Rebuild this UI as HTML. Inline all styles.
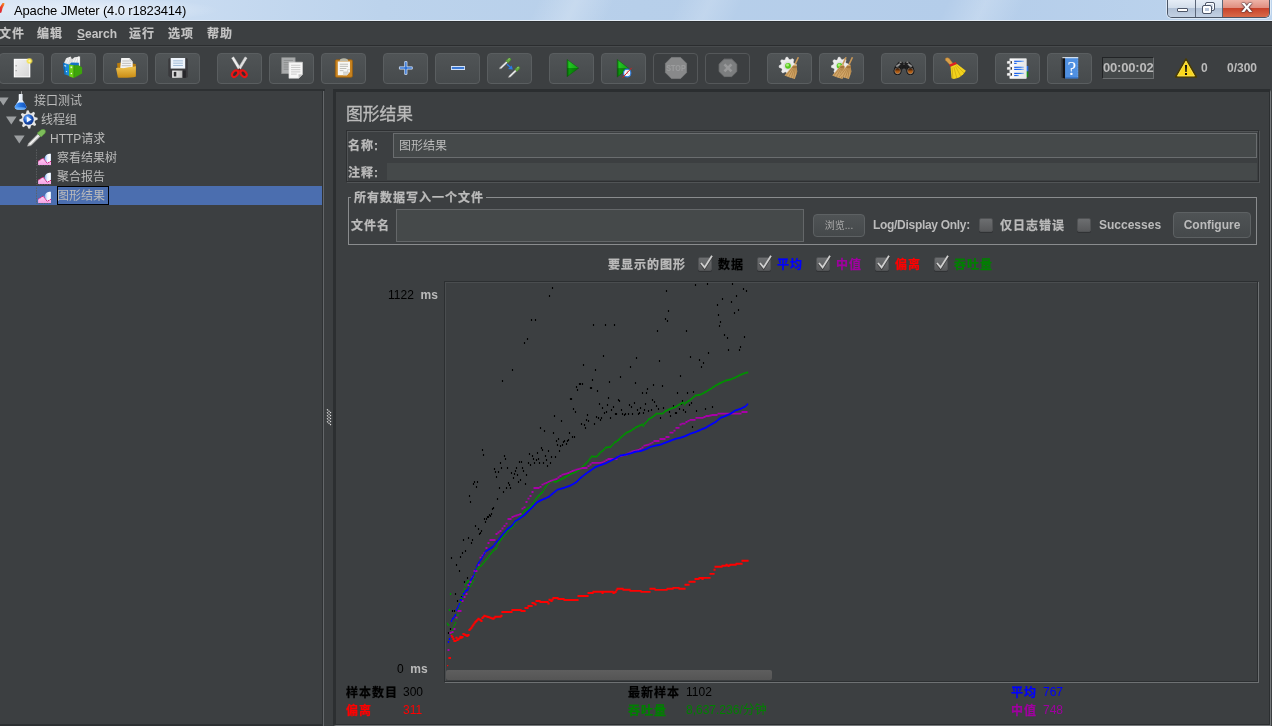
<!DOCTYPE html>
<html><head><meta charset="utf-8"><title>Apache JMeter (4.0 r1823414)</title>
<style>
*{box-sizing:border-box;margin:0;padding:0}
html,body{width:1272px;height:726px;overflow:hidden;background:#3c3f41}
body{position:relative;will-change:transform;font-family:"Liberation Sans","Noto Sans CJK SC",sans-serif;font-size:12px;color:#bbbbbb}
.abs{position:absolute}
#title{left:0;top:0;width:1272px;height:21px;background:radial-gradient(ellipse 120px 12px at 100px 10px,rgba(255,255,255,.5),rgba(255,255,255,0) 100%),linear-gradient(115deg,rgba(255,255,255,0) 0,rgba(255,255,255,0) 42%,rgba(255,255,255,.22) 45%,rgba(255,255,255,0) 48%,rgba(255,255,255,0) 53%,rgba(255,255,255,.16) 55.5%,rgba(255,255,255,0) 58%,rgba(255,255,255,0) 74%,rgba(255,255,255,.2) 77%,rgba(255,255,255,0) 80%),linear-gradient(90deg,#dbe7f5 0,#cbddf2 12%,#bcd3ec 30%,#b7cfea 50%,#b4cdea 75%,#bdd4ed 100%);border-bottom:1px solid #e4edf7}
#title .t{left:14px;top:3px;font-size:13px;color:#000;line-height:16px;white-space:nowrap;letter-spacing:-.15px}
#wbtns{left:1167px;top:0;width:103px;height:18px;border:1px solid #4a5566;border-top:0;border-radius:0 0 5px 5px;overflow:hidden;display:flex;box-shadow:0 0 0 1px rgba(255,255,255,.5)}
.wb{height:17px;position:relative;border-right:1px solid #5b6678;background:linear-gradient(#e6edf6 0,#d3deeb 45%,#b1c1d6 50%,#c3d1e3 100%)}
.wmin{width:28px}.wmax{width:28px}
.wclose{width:46px;border-right:0;background:linear-gradient(#eeb4a8 0,#e08f80 45%,#c8432b 50%,#d86a4a 100%)}
.wmin i{position:absolute;left:9px;top:8px;width:11px;height:4px;background:#fff;border:1px solid #4d5668;border-radius:1px}
.wmax i{position:absolute;left:10px;top:3px;width:8px;height:7px;border:1.5px solid #fff;outline:1px solid #4d5668;border-radius:1px}
.wmax b{position:absolute;left:7px;top:6px;width:8px;height:7px;border:2px solid #fff;outline:1px solid #4d5668;background:#b9c7da;border-radius:1px}
.wclose span{position:absolute;left:2px;right:0;top:-2px;text-align:center;font-weight:bold;font-size:16px;line-height:18px;color:#fff;text-shadow:0 0 1px #40303a,0 0 1px #40303a,0 0 2px #40303a;transform:scaleX(1.25)}
#menubar{left:0;top:21px;width:1272px;height:24px;background:#3c3f41;border-top:1px solid #2f3234}
#menubar span{-webkit-text-stroke:.2px;position:absolute;top:5px;font-size:12px;line-height:14px;color:#c4c4c4;white-space:nowrap;font-weight:bold;letter-spacing:1px}
#menubar span.en{-webkit-text-stroke:0;letter-spacing:0;font-size:12px;top:5px}
#menuline{left:0;top:45px;width:1272px;height:2px;background:#2b2d2f;border-bottom:1px solid #484b4d}
#toolbar{left:0;top:47px;width:1272px;height:41px;background:#3c3f41}
.tb{position:absolute;top:6px;width:45px;height:31px;border:1px solid #5a5e60;border-radius:4px;background:linear-gradient(#505456,#464a4c)}
.tb.dis{background:#3c3f41;border-color:#55585a}
.tb svg{position:absolute;left:0;top:0;overflow:visible}
#timer{left:1102px;top:10px;width:52px;height:22px;border:1px solid #222426;border-right-color:#6a6d6f;border-bottom-color:#6a6d6f;background:#45494a;color:#bbb;font-weight:bold;font-size:13px;line-height:20px;text-align:center;letter-spacing:-.2px;white-space:nowrap}
.tbt{top:14px;font-size:12px;font-weight:bold;color:#bbb;line-height:15px;white-space:nowrap}
#hsep{display:none}
#tree{left:0;top:90px;width:322px;height:636px;background:#3c3f41;border-bottom:2px solid #2d3032}
#treetop{left:0;top:89px;width:324px;height:2px;background:#2d3032}
#tree .sel{left:0;top:96px;width:322px;height:19px;background:#4b6eaf}
#tree .focus{left:57px;top:96px;width:52px;height:19px;border:1px solid #000}
.row{position:absolute;height:19px;line-height:20px;font-size:12px;white-space:nowrap;color:#bbbbbb}
#divider{left:322px;top:89px;width:12px;height:637px;background:linear-gradient(#2d3032 0 2px,#3c3f41 2px) ;border-left:1px solid #2f3234}
#divider:after{content:'';position:absolute;left:0;top:2px;width:1px;height:635px;background:#64676a}
#divgap{left:325px;top:88px;width:8px;height:10px;background:#3c3f41}

#main{left:333px;top:89px;width:938px;height:637px;background:#3c3f41;border-left:3px solid #2c2f31;border-top:3px solid #2b2e30;border-right:1px solid #75787a;border-bottom:1px solid #75787a;box-shadow:inset -1px -1px 0 #2b2e30}
.h1{-webkit-text-stroke:.3px;font-size:16.8px;line-height:22px;color:#bbb;white-space:nowrap}
.lb{-webkit-text-stroke:.25px;font-weight:bold;font-size:12px;line-height:15px;letter-spacing:1px;white-space:nowrap;color:#bbb}
.lb.en{letter-spacing:0;-webkit-text-stroke:0}
.val{font-size:12px;line-height:15px;white-space:nowrap}
#namebox{left:346px;top:130px;width:913px;height:52px;border:1px solid #2e3032;box-shadow:inset 1px 1px 0 #515456,1px 1px 0 #515456}
#namefield{left:393px;top:133px;width:864px;height:25px;border:1px solid #6a6d6f;background:#45494a;color:#bbb;font-size:12px;line-height:25px;padding-left:5px}
#commentfield{left:387px;top:163px;width:870px;height:17px;background:#45494a}
#fs{left:348px;top:197px;width:909px;height:48px;border:1px solid #8a8c8e}
.legend{background:#3c3f41;padding:0 2px 0 3px}
#filefield{left:396px;top:209px;width:408px;height:33px;border:1px solid #646769;background:#45494a}
.btn{border:1px solid #5d6163;border-radius:4px;background:linear-gradient(#4f5355,#45494b);color:#bbb;font-weight:bold;font-size:12px;text-align:center;line-height:24px;white-space:nowrap}
.btn.small{font-weight:normal;font-size:10px;line-height:21px;color:#a8a8a8}
.cb{width:14px;height:14px;border:1px solid #505254;border-radius:2px;background:linear-gradient(#6c6e70,#58595b);box-shadow:0 1px 0 #303234}
#chart{left:444px;top:281px;width:814px;height:401px;border:1px solid #2c2f31;box-shadow:inset 1px 1px 0 #4a4d4f,1px 1px 0 #6e7173}
.ax{font-size:12px;line-height:15px;color:#bbb;white-space:nowrap}
#sbar{left:446px;top:670px;width:326px;height:10px;background:linear-gradient(#5e5e5e,#555555);border-radius:2px}
#botline{display:none}

</style></head><body>
<div id="title" class="abs">
<svg class="abs" style="left:0;top:0" width="8" height="21" viewBox="0 0 8 21"><defs><linearGradient id="gfe" x1="0" y1="1" x2="1" y2="0"><stop offset="0" stop-color="#d81e3a"/><stop offset=".55" stop-color="#ee4a24"/><stop offset="1" stop-color="#f99d1c"/></linearGradient></defs><path d="M0 13 L0 7 L2.6 3 L4.4 3.1 L4.2 5 L2.6 8 L1.4 12.6Z" fill="url(#gfe)"/></svg>
<div class="t abs">Apache JMeter (4.0 r1823414)</div>
<div id="wbtns" class="abs"><div class="wb wmin"><i></i></div><div class="wb wmax"><i></i><b></b></div><div class="wb wclose"><span>x</span></div></div>
</div>
<div id="menubar" class="abs"><span style="left:-1px">文件</span><span style="left:37px">编辑</span><span class="en" style="left:77px"><u>S</u>earch</span><span style="left:129px">运行</span><span style="left:168px">选项</span><span style="left:207px">帮助</span></div>
<div id="menuline" class="abs"></div>
<div id="toolbar" class="abs">
<div class="tb" style="left:-1px"><svg width="43" height="29" viewBox="0 0 43 29"><g transform="translate(9.83 1.99) scale(1.019 0.969)"><defs><linearGradient id="gnew" x1="0" y1="0" x2="1" y2="1"><stop offset="0" stop-color="#f2f2f2"/><stop offset="1" stop-color="#d6d6d6"/></linearGradient><radialGradient id="gstar"><stop offset="0" stop-color="#fffbd0"/><stop offset=".5" stop-color="#f5e24a"/><stop offset="1" stop-color="#f5e24a" stop-opacity="0"/></radialGradient></defs>
<rect x="4.5" y="3.5" width="15" height="18" fill="url(#gnew)" stroke="#fdfdfd" stroke-width="1.2"/><rect x="5.6" y="9.5" width="1.2" height="1.2" fill="#999"/><rect x="5.6" y="14.5" width="1.2" height="1.2" fill="#999"/><circle cx="19.3" cy="5.2" r="3.6" fill="url(#gstar)"/></g></svg></div>
<div class="tb" style="left:51px"><svg width="43" height="29" viewBox="0 0 43 29"><g transform="translate(9.50 2.00) scale(1.000 1.000)"><path d="M2.3 7.4 L4.6 2.2 L9.2 0.5 L10.4 3.2 L13 1.2 L18.6 0.4 L18.6 10 L8 10 Z" fill="#dedede"/><path d="M4.2 6.6L6.4 1.8M6 7.2L8.2 1.2M11 7.4L13.6 1.6M13.4 7.6L16 1" stroke="#f8f8f8" stroke-width=".9"/><path d="M17.2 0.6 V9.4" stroke="#fafafa" stroke-width="1.2"/>
<path d="M7.6 8.6 L10 6.4 L17.4 6.8 L17.4 10.4 L8 12Z" fill="#1672c4"/><path d="M1.4 6.8 L7.6 8.6 L8 20 L3 18.2Z" fill="#1a8ad8"/><path d="M1.4 6.8 L3 7.3 L4.2 18.6 L3 18.2Z" fill="#0e66b4"/>
<path d="M7.6 8.4 L12.4 9.2 L12.4 22 L7.8 20.4Z" fill="#69cf14"/><path d="M12.4 9.2 L17.3 9.2 L20.6 11.4 L20.6 17.6 L12.4 22Z" fill="#3da50c"/><path d="M12.4 9.2V22" stroke="#2f8a08" stroke-width=".6"/>
<path d="M2.8 8.8 L4.6 9.4 L4.7 10.8 L2.9 10.2Z" fill="#cfe6fb"/><rect x="9" y="10.4" width="1.7" height="1.8" fill="#e6fad0"/><circle cx="5" cy="15.6" r=".65" fill="#dcecff"/><circle cx="9.9" cy="17.6" r=".75" fill="#f4ffe8"/></g></svg></div>
<div class="tb" style="left:103px"><svg width="43" height="29" viewBox="0 0 43 29"><g transform="translate(9.40 0.79) scale(1.042 1.070)"><defs><linearGradient id="gfo" x1="0" y1="0" x2="0" y2="1"><stop offset="0" stop-color="#f0c452"/><stop offset="1" stop-color="#c98c14"/></linearGradient></defs>
<path d="M3.5 8 L9 7 L21.5 8.5 L21.5 20 L4.5 20Z" fill="#b87c0e"/><path d="M7.5 3 L15.5 3 L18.5 6.5 L18.5 13 L6.5 13Z" fill="#f4f4f4"/><path d="M15.5 3 L18.5 6.5 L15.2 6.6Z" fill="#cfcfcf"/><path d="M8.5 5.8H15M8.3 8H17M8 10.200000000000001H17" stroke="#bdbdbd" stroke-width=".9"/>
<path d="M2.5 12.5 C6 11.6 9 13.2 12 12.2 C15 11.2 19 11.6 21.6 10.8 L21.4 20.5 C18 21.5 8 21.8 4.3 21.2 Z" fill="url(#gfo)"/></g></svg></div>
<div class="tb" style="left:155px"><svg width="43" height="29" viewBox="0 0 43 29"><g transform="translate(9.05 0.70) scale(1.083 1.100)"><defs><linearGradient id="gsv" x1="0" y1="0" x2="1" y2="0"><stop offset="0" stop-color="#fafafa"/><stop offset="1" stop-color="#b9b9b9"/></linearGradient></defs>
<path d="M3 4.5 Q3 3 4.5 3 L19.5 3 Q21 3 21 4.500000000000001 L21 19.5 Q21 21 19.5 21 L5 21 L3 19.2Z" fill="#3a3a3d"/><rect x="5.2" y="3" width="13.4" height="9.6" fill="#eef4fb"/><path d="M7.5 5.6H16.5M7.500000000000001 7.7H16.5M7.5 9.8H16.5" stroke="#9fbad6" stroke-width=".9"/>
<rect x="6.6" y="14.4" width="9.6" height="6.6" fill="url(#gsv)"/><rect x="8" y="15.6" width="2.4" height="4.2" fill="#2d2d30"/><rect x="16.200000000000003" y="14.4" width="3" height="6.6" fill="#26262a"/></g></svg></div>
<div class="tb" style="left:217px"><svg width="43" height="29" viewBox="0 0 43 29"><g transform="translate(13.00 2.80) scale(1.000 1.000)"><path d="M0.6 1.3 L2.7 0 L9.7 11.4 L7.4 12.7Z" fill="#ececec" stroke="#c4c4c4" stroke-width=".4"/><path d="M16.1 1.3 L14 0 L7 11.4 L9.3 12.700000000000001Z" fill="#dcdcdc" stroke="#b8b8b8" stroke-width=".4"/>
<path d="M1.2 1.6L8 12M15.5 1.6L8.7 12" stroke="#fff" stroke-width=".7" stroke-dasharray="1 1" opacity=".8"/>
<path d="M8.35 11.6 L10.6 13.4 L9 15.6 L8.35 14.2 L7.7 15.6 L6.1 13.4Z" fill="#d80e0e"/>
<ellipse cx="4.1" cy="16.9" rx="2.5" ry="3.7" transform="rotate(42 4.1 16.9)" fill="#3a2c2e" stroke="#ea1414" stroke-width="2.1"/><ellipse cx="12.6" cy="16.9" rx="2.5" ry="3.7" transform="rotate(-42 12.6 16.9)" fill="#3a2c2e" stroke="#ea1414" stroke-width="2.1"/><circle cx="8.35" cy="12.4" r=".8" fill="#333"/></g></svg></div>
<div class="tb" style="left:269px"><svg width="43" height="29" viewBox="0 0 43 29"><g transform="translate(7.47 0.85) scale(1.192 1.107)"><rect x="3.6" y="2.6" width="11.2" height="14.4" fill="#a9abac" stroke="#8f9192" stroke-width=".6"/><path d="M5.2 5H13M5.2 7H13M5.2 9H13M5.2 11H13M5.2 13H13" stroke="#8a8c8d" stroke-width=".8"/>
<path d="M9.6 6.6 L21 6.6 L21 17.8 L17.8 21.2 L9.6 21.2Z" fill="#f6f6f6" stroke="#d4d4d4" stroke-width=".5"/><path d="M21 17.8 L17.8 21.2 L17.6 17.6Z" fill="#c4c4c4"/><path d="M11.4 9.4H19.2M11.4 11.4H19.2M11.4 13.4H19.2M11.4 15.4H19.2M11.4 17.4H16.200000000000003" stroke="#c6c6c6" stroke-width=".8"/></g></svg></div>
<div class="tb" style="left:321px"><svg width="43" height="29" viewBox="0 0 43 29"><g transform="translate(9.69 2.25) scale(1.017 0.973)"><rect x="3.6" y="3.6" width="16.8" height="18" rx="1.4" fill="#c9831f" stroke="#9a5d0c" stroke-width=".7"/><path d="M8.4 3.2 Q12 0.8 15.6 3.2 L16.4 5.2 L7.6 5.2Z" fill="#b9b8a8"/>
<path d="M6 5.4 L18 5.4 L18 16 L15 19.6 L6 19.6Z" fill="#f7f7f5"/><path d="M18 16 L15 19.6 L11.2 19.6 L11.2 16.2 Z" fill="#d9d9d4"/><path d="M11.2 16.2 L15.6 16.2 L15.6 13.8 L18 13.8" fill="none" stroke="#c3c3bd" stroke-width=".6"/>
<path d="M8 8.2H16M8 10.399999999999999H16M8 12.6H14.4M8 14.8H11.6" stroke="#b7b7b2" stroke-width=".9"/></g></svg></div>
<div class="tb" style="left:383px"><svg width="43" height="29" viewBox="0 0 43 29"><g transform="translate(10.51 2.74) scale(0.945 0.938)"><path d="M10.8 5.2H13.2V10.8H18.8V13.2H13.2V18.8H10.8V13.2H5.2V10.8H10.8Z" fill="#2d6fd2" stroke="#cfe0f8" stroke-width=".9"/></g></svg></div>
<div class="tb" style="left:435px"><svg width="43" height="29" viewBox="0 0 43 29"><g transform="translate(10.41 -0.55) scale(0.966 1.212)"><rect x="5.2" y="10.8" width="13.6" height="2.4" fill="#2d6fd2" stroke="#cfe0f8" stroke-width=".9"/></g></svg></div>
<div class="tb" style="left:487px"><svg width="43" height="29" viewBox="0 0 43 29"><g transform="translate(8.26 1.27) scale(1.118 1.063)"><g transform="translate(2.5 2.2)"><path d="M0.3 10.8 L1 9 L6.6 3.4 L7.8 4.6 L2.2 10.2 Z" fill="#ececec" stroke="#8c8c8c" stroke-width=".45"/><path d="M6 2.9 L8.4 0.7 Q9.6 -0.1 10.4 0.8 Q11.1 1.7 10.2 2.8 L8.1 5Z" fill="#63a840" stroke="#3f7a26" stroke-width=".4"/><path d="M8.2 1.6L9.6 1" stroke="#b4e08e" stroke-width=".6"/></g><g transform="translate(10.5 10.2)"><path d="M0.3 10.8 L1 9 L6.6 3.4 L7.8 4.6 L2.2 10.2 Z" fill="#ececec" stroke="#8c8c8c" stroke-width=".45"/><path d="M6 2.9 L8.4 0.7 Q9.6 -0.1 10.4 0.8 Q11.1 1.7 10.2 2.8 L8.1 5Z" fill="#63a840" stroke="#3f7a26" stroke-width=".4"/><path d="M8.2 1.6L9.6 1" stroke="#b4e08e" stroke-width=".6"/></g><path d="M9.6 8.4 L12.8 11.4" stroke="#2a7ae2" stroke-width="1.2"/><path d="M14.8 13.4 L10.6 12.8 L13.8 9.6Z" fill="#2a7ae2"/></g></svg></div>
<div class="tb" style="left:549px"><svg width="43" height="29" viewBox="0 0 43 29"><g transform="translate(10.98 2.30) scale(0.946 0.983)"><defs><linearGradient id="gsa" x1="0" y1="0" x2="1" y2="0"><stop offset="0" stop-color="#0a7a0a"/><stop offset=".18" stop-color="#22c622"/><stop offset="1" stop-color="#12a012"/></linearGradient><linearGradient id="gsb" x1="0" y1="0" x2="1" y2="0"><stop offset="0" stop-color="#056005"/><stop offset=".2" stop-color="#0c960c"/><stop offset="1" stop-color="#067006"/></linearGradient></defs><path d="M6.4 3.2 L18.8 12 L6.4 12Z" fill="url(#gsa)"/><path d="M6.4 12 L18.8 12 L6.4 20.8Z" fill="url(#gsb)"/><path d="M6.4 3.2 L18.8 12 L6.4 20.8Z" fill="none" stroke="#0a5a0a" stroke-width=".5"/></g></svg></div>
<div class="tb" style="left:601px"><svg width="43" height="29" viewBox="0 0 43 29"><g transform="translate(10.59 2.25) scale(0.927 1.000)"><defs><linearGradient id="gsc" x1="0" y1="0" x2="1" y2="0"><stop offset="0" stop-color="#0a7a0a"/><stop offset=".18" stop-color="#22c622"/><stop offset="1" stop-color="#12a012"/></linearGradient><linearGradient id="gsd" x1="0" y1="0" x2="1" y2="0"><stop offset="0" stop-color="#056005"/><stop offset=".2" stop-color="#0c960c"/><stop offset="1" stop-color="#067006"/></linearGradient></defs><path d="M5 3.2 L17.4 12 L5 12Z" fill="url(#gsc)"/><path d="M5 12 L17.4 12 L5 20.8Z" fill="url(#gsd)"/><path d="M5 3.2 L17.4 12 L5 20.8Z" fill="none" stroke="#0a5a0a" stroke-width=".5"/><circle cx="15.8" cy="16.8" r="3.9" fill="#f6f8fb" stroke="#2f7bd8" stroke-width="1.2"/><path d="M15.8 14.4V16.9L17.2 17.8" stroke="#888" stroke-width=".6" fill="none"/><path d="M10.8 21.4 L20.6 11.6" stroke="#e01818" stroke-width="1"/></g></svg></div>
<div class="tb dis" style="left:653px"><svg width="43" height="29" viewBox="0 0 43 29"><g transform="translate(8.80 0.80) scale(1.100 1.100)"><path d="M7.8 2.4H16.2L21.6 7.8V16.2L16.2 21.6H7.8L2.4 16.200000000000003V7.8Z" fill="#88898a" stroke="#797b7c" stroke-width=".8"/><text x="12" y="14.7" text-anchor="middle" font-family="Liberation Sans, sans-serif" font-weight="bold" font-size="7.4" fill="#9c9d9e" textLength="17.6" lengthAdjust="spacingAndGlyphs">STOP</text></g></svg></div>
<div class="tb dis" style="left:705px"><svg width="43" height="29" viewBox="0 0 43 29"><g transform="translate(8.74 0.78) scale(1.101 1.089)"><path d="M8.6 4H15.4L20 8.6V15.4L15.4 20H8.6L4 15.4V8.6Z" fill="#7c7e7f" stroke="#727475" stroke-width=".8"/><path d="M8.8 8.8L15.2 15.2M15.2 8.8L8.8 15.2" stroke="#98999a" stroke-width="2.4"/></g></svg></div>
<div class="tb" style="left:767px"><svg width="43" height="29" viewBox="0 0 43 29"><g transform="translate(10.70 3.00) scale(1.000 1.000)"><polygon points="17.43,7.12 17.60,8.80 15.41,10.08 15.04,11.30 16.15,13.58 15.08,14.88 12.63,14.23 11.50,14.84 10.68,17.23 9.00,17.40 7.72,15.21 6.50,14.84 4.22,15.95 2.92,14.88 3.57,12.43 2.96,11.30 0.57,10.48 0.40,8.80 2.59,7.52 2.96,6.30 1.85,4.02 2.92,2.72 5.37,3.37 6.50,2.76 7.32,0.37 9.00,0.20 10.28,2.39 11.50,2.76 13.78,1.65 15.08,2.72 14.43,5.17 15.04,6.30" fill="#ececec" stroke="#f8f8f8" stroke-width=".5" stroke-linejoin="round"/><circle cx="9" cy="8.8" r="4.30" fill="#dedede"/><circle cx="9.3" cy="8.8" r="2.9" fill="#55c81c"/><circle cx="8.8" cy="8.0" r="1.5" fill="#a8ee78"/><g transform="translate(0 0)"><path d="M18.9 0 L20.4 0.5 L17 7.8 L15.5 7.2Z" fill="#c99858"/><path d="M14.6 8 L17.6 7.4 L18.6 14.8 L16.1 21.9 L11 20.5 L5.8 18.4Z" fill="#d2a668"/><path d="M15 9 L7.4 18.8M15.6 9.4L10 20M16.2 9.4L12.6 20.8M16.8 9.6L15 21.4M17.4 9.8L17.6 17.4" stroke="#a87a3c" stroke-width=".7"/><path d="M14.2 9.6 L18 9 L18.2 10.4 L13.6 11Z" fill="#9a6c34" opacity=".8"/></g></g></svg></div>
<div class="tb" style="left:819px"><svg width="43" height="29" viewBox="0 0 43 29"><g transform="translate(10.60 3.00) scale(1.000 1.000)"><polygon points="17.83,7.12 18.00,8.80 15.81,10.08 15.44,11.30 16.55,13.58 15.48,14.88 13.03,14.23 11.90,14.84 11.08,17.23 9.40,17.40 8.12,15.21 6.90,14.84 4.62,15.95 3.32,14.88 3.97,12.43 3.36,11.30 0.97,10.48 0.80,8.80 2.99,7.52 3.36,6.30 2.25,4.02 3.32,2.72 5.77,3.37 6.90,2.76 7.72,0.37 9.40,0.20 10.68,2.39 11.90,2.76 14.18,1.65 15.48,2.72 14.83,5.17 15.44,6.30" fill="#ececec" stroke="#f8f8f8" stroke-width=".5" stroke-linejoin="round"/><circle cx="9.4" cy="8.8" r="4.30" fill="#dedede"/><circle cx="9" cy="8.8" r="2.9" fill="#55c81c"/><circle cx="8.5" cy="8.0" r="1.5" fill="#a8ee78"/><g transform="translate(-4.2 0)"><path d="M18.9 0 L20.4 0.5 L17 7.8 L15.5 7.2Z" fill="#c99858"/><path d="M14.6 8 L17.6 7.4 L18.6 14.8 L16.1 21.9 L11 20.5 L5.8 18.4Z" fill="#d2a668"/><path d="M15 9 L7.4 18.8M15.6 9.4L10 20M16.2 9.4L12.6 20.8M16.8 9.6L15 21.4M17.4 9.8L17.6 17.4" stroke="#a87a3c" stroke-width=".7"/><path d="M14.2 9.6 L18 9 L18.2 10.4 L13.6 11Z" fill="#9a6c34" opacity=".8"/></g><g transform="translate(2.2 0)"><path d="M18.9 0 L20.4 0.5 L17 7.8 L15.5 7.2Z" fill="#c99858"/><path d="M14.6 8 L17.6 7.4 L18.6 14.8 L16.1 21.9 L11 20.5 L5.8 18.4Z" fill="#d2a668"/><path d="M15 9 L7.4 18.8M15.6 9.4L10 20M16.2 9.4L12.6 20.8M16.8 9.6L15 21.4M17.4 9.8L17.6 17.4" stroke="#a87a3c" stroke-width=".7"/><path d="M14.2 9.6 L18 9 L18.2 10.4 L13.6 11Z" fill="#9a6c34" opacity=".8"/></g></g></svg></div>
<div class="tb" style="left:881px"><svg width="43" height="29" viewBox="0 0 43 29"><g transform="translate(11.00 6.80) scale(1.000 1.000)"><defs><linearGradient id="glens" x1="0" y1="0" x2="0" y2="1"><stop offset="0" stop-color="#1e0e03"/><stop offset=".3" stop-color="#5a2a08"/><stop offset=".6" stop-color="#a8560f"/><stop offset="1" stop-color="#c87224"/></linearGradient></defs><rect x="8.6" y="2.4" width="4.8" height="6.4" rx="1.4" fill="#1a1a1b"/><rect x="9.6" y="3" width="2.8" height="1" rx=".5" fill="#777"/><rect x="9.8" y="7.8" width="2.4" height="1.6" fill="#555"/><g><path d="M5.6 1.2 Q7.6 -0.4 9.7 1.2 L10.6 4.2 L8.8 7 L8.6 10 A4 4.1 0 1 1 0.5 10 L1.8 5.6 Z" fill="#1e1e1f"/><path d="M2.6 5.2 L6.4 2.4 L7.6 3.4 L4.2 7Z" fill="#a9a9a9" opacity=".85"/><ellipse cx="7.6" cy="1.3" rx="1.3" ry=".55" fill="#b5b5b5"/><ellipse cx="4.6" cy="9.9" rx="3.75" ry="3.9" fill="#0e0e0e"/><ellipse cx="4.6" cy="10" rx="2.9" ry="3.1" fill="url(#glens)" stroke="#9a9a9a" stroke-width=".5"/></g><g transform="translate(22 0) scale(-1 1)"><path d="M5.6 1.2 Q7.6 -0.4 9.7 1.2 L10.6 4.2 L8.8 7 L8.6 10 A4 4.1 0 1 1 0.5 10 L1.8 5.6 Z" fill="#1e1e1f"/><path d="M2.6 5.2 L6.4 2.4 L7.6 3.4 L4.2 7Z" fill="#a9a9a9" opacity=".85"/><ellipse cx="7.6" cy="1.3" rx="1.3" ry=".55" fill="#b5b5b5"/><ellipse cx="4.6" cy="9.9" rx="3.75" ry="3.9" fill="#0e0e0e"/><ellipse cx="4.6" cy="10" rx="2.9" ry="3.1" fill="url(#glens)" stroke="#9a9a9a" stroke-width=".5"/></g></g></svg></div>
<div class="tb" style="left:933px"><svg width="43" height="29" viewBox="0 0 43 29"><g transform="translate(3.77 2.70) scale(1.302 0.995)"><path d="M6.2 1.4 Q7.8 0.4 8.8 1.8 L12 7.4 L9.8 8.8 L6 3.6 Q5.4 2.2 6.2 1.4Z" fill="#d9a04a" stroke="#a8702a" stroke-width=".4"/><path d="M8.6 8.2 L13.6 5.4 L14.8 7.4 L9.8 10.2Z" fill="#e02020"/><path d="M9.8 10.2 L14.8 7.4 L21.6 14.2 L19.6 17.6 L16.4 21 L12.4 22.4 L10.6 21.6Z" fill="#f2d21c"/><path d="M11 11 L11.6 21.4M12.4 10.4L14.6 21.6M13.6 9.6L17.6 19.6M14.4 8.8L20.2 16.4" stroke="#c9a40e" stroke-width=".6"/></g></svg></div>
<div class="tb" style="left:995px"><svg width="43" height="29" viewBox="0 0 43 29"><g transform="translate(11.00 4.80) scale(1.000 1.000)"><defs><linearGradient id="gfp" x1="0" y1="0" x2="1" y2="0"><stop offset="0" stop-color="#fdfdfd"/><stop offset="1" stop-color="#e6e6e6"/></linearGradient><linearGradient id="gfl2" x1="0" y1="0" x2="1" y2="0"><stop offset="0" stop-color="#0a50e8"/><stop offset=".6" stop-color="#2f7af0"/><stop offset="1" stop-color="#a8c8f8"/></linearGradient></defs>
<rect x="19" y="7.2" width="2.3" height="5.4" fill="#2a6fe0"/><rect x="19" y="12.8" width="2.3" height="5.4" fill="#178a17"/>
<rect x="2.9" y="0" width="16.3" height="19.6" fill="url(#gfp)" stroke="#fff" stroke-width=".6"/>
<g fill="url(#gfl2)"><rect x="7.2" y="1.9" width="9.8" height="1.2"/><rect x="7.2" y="4" width="3" height="1.2"/><rect x="7.2" y="7.9" width="9.8" height="1.2"/><rect x="7.2" y="10" width="9.8" height="1.2"/><rect x="7.2" y="14" width="9.8" height="1.2"/><rect x="7.2" y="16.1" width="4.8" height="1.2"/></g>
<g fill="#f2f2f2" stroke="#8a8a8a" stroke-width=".35"><rect x="0" y="2.2" width="4.2" height="2.8" rx=".6"/><rect x="0" y="8.2" width="4.2" height="2.8" rx=".6"/><rect x="0" y="14.2" width="4.2" height="2.8" rx=".6"/></g><g fill="#0c0c0c"><rect x="3.7" y="2.4" width="1.1" height="2.4"/><rect x="3.7" y="8.4" width="1.1" height="2.4"/><rect x="3.7" y="14.4" width="1.1" height="2.4"/></g></g></svg></div>
<div class="tb" style="left:1047px"><svg width="43" height="29" viewBox="0 0 43 29"><g transform="translate(13.60 3.20) scale(1.000 1.000)"><path d="M0 1 L3.5 0 L3.5 21.2 L0 20.4Z" fill="#121214"/><path d="M0 1 L1 0.7 L1 20.6 L0 20.4Z" fill="#48484c"/><rect x="3.5" y="0" width="13.1" height="21.2" fill="#4f90e2"/><rect x="0.8" y="0" width="15.8" height="1" fill="#f0f4f8"/><path d="M16.1 1.2V20" stroke="#8db8ee" stroke-width=".5" stroke-dasharray=".8 .8"/><rect x="3.5" y="20.2" width="13.1" height="1" fill="#2f6bc0"/><text x="10.2" y="17.9" text-anchor="middle" font-family="Liberation Serif, serif" font-size="19.5" fill="#ffffff">?</text></g></svg></div>
<div id="timer" class="abs">00:00:02</div>
<svg class="abs" style="left:1174px;top:10px" width="24" height="22" viewBox="0 0 24 22"><path d="M12 2 L22.4 20 H1.6Z" fill="#f9d71c" stroke="#4a3c00" stroke-width="1.5" stroke-linejoin="round"/><path d="M12 4.2 L20.4 18.9 H3.6Z" fill="none" stroke="#fbe565" stroke-width=".7" stroke-linejoin="round"/><path d="M11 8 H13 L12.7 15 H11.3Z" fill="#111"/><rect x="11" y="16" width="2" height="2" fill="#111"/></svg>
<div class="abs tbt" style="left:1201px">0</div><div class="abs tbt" style="left:1227px">0/300</div>
</div>
<div id="hsep" class="abs"></div>
<div id="tree" class="abs">
<div class="sel abs"></div>
<svg class="abs" style="left:-2px;top:7px" width="11" height="9" viewBox="0 0 11 9"><path d="M0 0.5H10.6L5.3 8.6Z" fill="#9c9fa1"/></svg><svg class="abs" style="left:14px;top:1px" width="13" height="19" viewBox="0 0 13 19"><defs><linearGradient id="gfl" x1="0" y1="0" x2="1" y2="0"><stop offset="0" stop-color="#5aa8ff"/><stop offset=".5" stop-color="#1f6fe0"/><stop offset="1" stop-color="#1452b8"/></linearGradient></defs><path d="M7.2 0.2L7.8 0.2L7.8 3 L7.2 3Z" fill="#ddd"/><path d="M4.8 3 H8.6 V9 L12.4 15.6 Q12.6 18 10 18.4 H3.2 Q0.4 18 0.8 15.6 L4.8 9Z" fill="#e8eef6"/><path d="M3.4 11.6 H10.2 L12.4 15.6 Q12.6 18 10 18.4 H3.2 Q0.4 18 0.8 15.6Z" fill="url(#gfl)"/><ellipse cx="6.6" cy="17.6" rx="5.2" ry="1.4" fill="#7fc0ff" opacity=".7"/><path d="M5.4 4V9.4L3.6 12.4" stroke="#fff" stroke-width=".8" fill="none"/></svg><div class="row" style="left:34px;top:1px">接口测试</div>
<svg class="abs" style="left:6px;top:26px" width="11" height="9" viewBox="0 0 11 9"><path d="M0 0.5H10.6L5.3 8.6Z" fill="#9c9fa1"/></svg><svg class="abs" style="left:19px;top:20px" width="19" height="19" viewBox="0 0 19 19"><defs><radialGradient id="ggr" cx=".4" cy=".35"><stop offset="0" stop-color="#8fc2ff"/><stop offset=".6" stop-color="#2d6fd8"/><stop offset="1" stop-color="#143f9a"/></radialGradient></defs><polygon points="18.52,7.71 18.70,9.50 16.00,10.79 15.62,12.03 17.15,14.61 16.01,16.01 13.18,15.01 12.03,15.62 11.29,18.52 9.50,18.70 8.21,16.00 6.97,15.62 4.39,17.15 2.99,16.01 3.99,13.18 3.38,12.03 0.48,11.29 0.30,9.50 3.00,8.21 3.38,6.97 1.85,4.39 2.99,2.99 5.82,3.99 6.97,3.38 7.71,0.48 9.50,0.30 10.79,3.00 12.03,3.38 14.61,1.85 16.01,2.99 15.01,5.82 15.62,6.97" fill="#e6e6e6"/><circle cx="9.5" cy="9.5" r="5.2" fill="url(#ggr)"/><path d="M7.8 6.6L12.6 9.5L7.8 12.4Z" fill="#f4f8ff"/></svg><div class="row" style="left:41px;top:20px">线程组</div>
<svg class="abs" style="left:14px;top:45px" width="11" height="9" viewBox="0 0 11 9"><path d="M0 0.5H10.6L5.3 8.6Z" fill="#9c9fa1"/></svg><svg class="abs" style="left:27px;top:39px" width="19" height="18" viewBox="0 0 19 18"><path d="M0.4 17.2 L1.6 14.2 L11 4.8 L13.4 7.2 L4 16.6 Z" fill="#d9d9d9" stroke="#8e8e8e" stroke-width=".6"/><path d="M3 15 L11.4 6.6" stroke="#fff" stroke-width=".9"/><path d="M10.2 4 L14.6 0.6 Q16.8 -0.4 18 1 Q19.2 2.6 17.8 4.400000000000001 L14.2 8Z" fill="#7dbd5a" stroke="#4f8f34" stroke-width=".5"/></svg><div class="row" style="left:50px;top:39px">HTTP请求</div>
<svg class="abs" style="left:36px;top:59px" width="17" height="17" viewBox="0 0 17 17"><defs><linearGradient id="gbl58" x1="0" y1="0" x2="1" y2="0"><stop offset="0" stop-color="#6f9ff0"/><stop offset=".45" stop-color="#e8f1ff"/><stop offset=".8" stop-color="#ffffff"/><stop offset="1" stop-color="#cfe0fa"/></linearGradient><linearGradient id="gpk58" x1="0" y1="0" x2="0" y2="1"><stop offset="0" stop-color="#ffd2f2"/><stop offset="1" stop-color="#f5a2e6"/></linearGradient></defs><path d="M0.5 0.5V16.4H16" stroke="#5e6163" stroke-width=".9" fill="none" stroke-dasharray="1.4 1.2"/><path d="M8.6 9 Q9.6 5.4 13.2 4.8 H15 V12.4 L11.2 14.4 L8.2 10.4Z" fill="url(#gbl58)"/><path d="M2.1 12.2 L7.1 9.1 L11.2 14.3 L15 12.2 V16 H2.1Z" fill="url(#gpk58)"/><path d="M2.1 12.2 L7.1 9.1 L11.2 14.3 L15 12.2" stroke="#d62482" stroke-width="1" fill="none" stroke-dasharray="1.6 .6"/></svg><div class="row" style="left:57px;top:58px">察看结果树</div>
<svg class="abs" style="left:36px;top:78px" width="17" height="17" viewBox="0 0 17 17"><defs><linearGradient id="gbl77" x1="0" y1="0" x2="1" y2="0"><stop offset="0" stop-color="#6f9ff0"/><stop offset=".45" stop-color="#e8f1ff"/><stop offset=".8" stop-color="#ffffff"/><stop offset="1" stop-color="#cfe0fa"/></linearGradient><linearGradient id="gpk77" x1="0" y1="0" x2="0" y2="1"><stop offset="0" stop-color="#ffd2f2"/><stop offset="1" stop-color="#f5a2e6"/></linearGradient></defs><path d="M0.5 0.5V16.4H16" stroke="#5e6163" stroke-width=".9" fill="none" stroke-dasharray="1.4 1.2"/><path d="M8.6 9 Q9.6 5.4 13.2 4.8 H15 V12.4 L11.2 14.4 L8.2 10.4Z" fill="url(#gbl77)"/><path d="M2.1 12.2 L7.1 9.1 L11.2 14.3 L15 12.2 V16 H2.1Z" fill="url(#gpk77)"/><path d="M2.1 12.2 L7.1 9.1 L11.2 14.3 L15 12.2" stroke="#d62482" stroke-width="1" fill="none" stroke-dasharray="1.6 .6"/></svg><div class="row" style="left:57px;top:77px">聚合报告</div>
<svg class="abs" style="left:36px;top:97px" width="17" height="17" viewBox="0 0 17 17"><defs><linearGradient id="gbl96" x1="0" y1="0" x2="1" y2="0"><stop offset="0" stop-color="#6f9ff0"/><stop offset=".45" stop-color="#e8f1ff"/><stop offset=".8" stop-color="#ffffff"/><stop offset="1" stop-color="#cfe0fa"/></linearGradient><linearGradient id="gpk96" x1="0" y1="0" x2="0" y2="1"><stop offset="0" stop-color="#ffd2f2"/><stop offset="1" stop-color="#f5a2e6"/></linearGradient></defs><path d="M0.5 0.5V16.4H16" stroke="#5e6163" stroke-width=".9" fill="none" stroke-dasharray="1.4 1.2"/><path d="M8.6 9 Q9.6 5.4 13.2 4.8 H15 V12.4 L11.2 14.4 L8.2 10.4Z" fill="url(#gbl96)"/><path d="M2.1 12.2 L7.1 9.1 L11.2 14.3 L15 12.2 V16 H2.1Z" fill="url(#gpk96)"/><path d="M2.1 12.2 L7.1 9.1 L11.2 14.3 L15 12.2" stroke="#d62482" stroke-width="1" fill="none" stroke-dasharray="1.6 .6"/></svg><div class="focus abs"></div><div class="row" style="left:57px;top:96px">图形结果</div>
</div>
<div id="divider" class="abs"></div><div id="treetop" class="abs"></div><div id="divgap" class="abs"></div>
<svg class="abs" style="left:0;top:0" width="1272" height="726" viewBox="0 0 1272 726"><path d="M327 409.4L331 413.0M327 412.4L331 416.0M327 415.4L331 419.0M327 418.4L331 422.0M327 421.4L331 425.0" stroke="#e4e4e4" stroke-width="1.1" stroke-dasharray="1.3 .75" fill="none"/></svg>
<div id="main" class="abs"></div>
<div class="abs h1" style="left:346px;top:104px">图形结果</div>
<div id="namebox" class="abs"></div>
<div class="abs lb" style="left:348px;top:139px">名称:</div><div id="namefield" class="abs">图形结果</div>
<div class="abs lb" style="left:348px;top:166px">注释:</div><div id="commentfield" class="abs"></div>
<div id="fs" class="abs"></div><div class="abs lb legend" style="left:351px;top:191px">所有数据写入一个文件</div>
<div class="abs lb" style="left:351px;top:219px">文件名</div><div id="filefield" class="abs"></div>
<div class="abs btn small" style="left:813px;top:214px;width:52px;height:23px">浏览...</div>
<div class="abs lb en" style="left:873px;top:218px;letter-spacing:-.3px">Log/Display Only:</div>
<div class="abs cb" style="left:979px;top:218px"></div><div class="abs lb" style="left:1000px;top:219px">仅日志错误</div>
<div class="abs cb" style="left:1077px;top:218px"></div><div class="abs lb en" style="left:1099px;top:218px">Successes</div>
<div class="abs btn" style="left:1173px;top:212px;width:78px;height:26px">Configure</div>
<div class="abs lb" style="left:608px;top:258px">要显示的图形</div>
<div class="abs cb" style="left:698px;top:257px"><svg width="18" height="18" viewBox="0 0 18 18" style="position:absolute;left:-2.4px;top:-4px;overflow:visible"><path d="M4 9.6 L7.6 14.2 L15 2.6" fill="none" stroke="#2c2c2c" stroke-width="2.6" opacity=".6"/><path d="M4 9 L7.6 13.4 L15 1.8" fill="none" stroke="#cfcfcf" stroke-width="1.8"/></svg></div><div class="abs lb" style="left:718px;top:258px;color:#000">数据</div>
<div class="abs cb" style="left:757px;top:257px"><svg width="18" height="18" viewBox="0 0 18 18" style="position:absolute;left:-2.4px;top:-4px;overflow:visible"><path d="M4 9.6 L7.6 14.2 L15 2.6" fill="none" stroke="#2c2c2c" stroke-width="2.6" opacity=".6"/><path d="M4 9 L7.6 13.4 L15 1.8" fill="none" stroke="#cfcfcf" stroke-width="1.8"/></svg></div><div class="abs lb" style="left:777px;top:258px;color:#0000ff">平均</div>
<div class="abs cb" style="left:816px;top:257px"><svg width="18" height="18" viewBox="0 0 18 18" style="position:absolute;left:-2.4px;top:-4px;overflow:visible"><path d="M4 9.6 L7.6 14.2 L15 2.6" fill="none" stroke="#2c2c2c" stroke-width="2.6" opacity=".6"/><path d="M4 9 L7.6 13.4 L15 1.8" fill="none" stroke="#cfcfcf" stroke-width="1.8"/></svg></div><div class="abs lb" style="left:836px;top:258px;color:#a000a0">中值</div>
<div class="abs cb" style="left:875px;top:257px"><svg width="18" height="18" viewBox="0 0 18 18" style="position:absolute;left:-2.4px;top:-4px;overflow:visible"><path d="M4 9.6 L7.6 14.2 L15 2.6" fill="none" stroke="#2c2c2c" stroke-width="2.6" opacity=".6"/><path d="M4 9 L7.6 13.4 L15 1.8" fill="none" stroke="#cfcfcf" stroke-width="1.8"/></svg></div><div class="abs lb" style="left:895px;top:258px;color:#ff0000">偏离</div>
<div class="abs cb" style="left:934px;top:257px"><svg width="18" height="18" viewBox="0 0 18 18" style="position:absolute;left:-2.4px;top:-4px;overflow:visible"><path d="M4 9.6 L7.6 14.2 L15 2.6" fill="none" stroke="#2c2c2c" stroke-width="2.6" opacity=".6"/><path d="M4 9 L7.6 13.4 L15 1.8" fill="none" stroke="#cfcfcf" stroke-width="1.8"/></svg></div><div class="abs lb" style="left:954px;top:258px;color:#008000">吞吐量</div>
<div id="chart" class="abs"></div>
<div class="abs ax" style="left:388px;top:288px"><span style="color:#000">1122</span>&nbsp; <b>ms</b></div>
<div class="abs ax" style="left:397px;top:662px"><span style="color:#000">0</span>&nbsp; <b>ms</b></div>
<svg class="abs" style="left:0;top:0" width="1272" height="726" viewBox="0 0 1272 726">
<path d="M552.5 287v2M549.5 295v2M531.5 319v2M535.5 319v2M593.5 324v2M527.5 338v2M524.5 342v2M583.5 364v2M512.5 369v2M595.5 369v2M502.5 380v2M592.5 379v2M580.5 383v2M582.5 383v2M576.5 386v2M577.5 389v2M590.5 387v2M597.5 390v2M571.5 398v2M695.5 284v2M707.5 283v2M732.5 283v2M743.5 288v2M746.5 290v2M666.5 290v2M736.5 295v2M722.5 298v2M731.5 301v2M717.5 304v2M738.5 309v2M734.5 312v2M668.5 310v2M718.5 314v2M665.5 318v2M667.5 320v2M720.5 321v2M719.5 325v2M605.5 324v2M614.5 324v2M657.5 330v2M686.5 330v2M724.5 334v2M727.5 337v2M744.5 336v2M740.5 346v2M739.5 349v2M728.5 349v2M708.5 352v2M603.5 355v2M636.5 357v2M690.5 356v2M659.5 360v2M699.5 359v2M703.5 362v2M701.5 366v2M630.5 366v2M680.5 375v2M620.5 376v2M609.5 381v2M635.5 382v2M653.5 384v2M662.5 385v2M647.5 388v2M591.5 387v2M642.5 392v2M646.5 392v2M677.5 392v2M687.5 392v2M693.5 391v2M608.5 397v2M618.5 399v2M652.5 399v2M619.5 400v2M654.5 401v2M682.5 400v2M599.5 403v2M634.5 402v2M645.5 403v2M629.5 404v2M656.5 405v2M607.5 404v2M613.5 406v2M691.5 402v2M689.5 404v2M712.5 406v2M673.5 405v2M681.5 403v2M602.5 407v2M631.5 406v2M663.5 407v2M640.5 407v2M658.5 408v2M705.5 408v2M679.5 408v2M611.5 409v2M621.5 409v2M637.5 409v2M644.5 409v2M651.5 409v2M683.5 409v2M696.5 410v2M648.5 410v2M669.5 411v2M685.5 411v2M606.5 411v2M604.5 412v2M615.5 413v2M616.5 413v2M622.5 413v2M624.5 414v2M625.5 413v2M628.5 413v2M632.5 413v2M638.5 413v2M639.5 412v2M643.5 412v2M675.5 412v2M676.5 412v2M596.5 416v2M598.5 417v2M601.5 417v2M600.5 419v2M610.5 417v2M660.5 417v2M670.5 415v2M594.5 423v2M692.5 426v2M556.5 440v2M564.5 440v2M567.5 440v2M557.5 444v2M560.5 445v2M562.5 444v2M566.5 443v2M541.5 447v2M542.5 449v2M548.5 450v2M559.5 450v2M537.5 452v2M529.5 453v2M532.5 455v2M545.5 455v2M551.5 456v2M555.5 456v2M533.5 458v2M536.5 459v2M538.5 458v2M546.5 459v2M519.5 461v2M521.5 461v2M528.5 462v2M534.5 462v2M539.5 462v2M543.5 462v2M550.5 462v2M530.5 464v2M547.5 465v2M482.5 449v2M483.5 454v2M504.5 455v2M505.5 458v2M500.5 462v2M501.5 467v2M507.5 467v2M494.5 468v2M516.5 467v2M522.5 467v2M515.5 470v2M495.5 471v2M498.5 471v2M523.5 470v2M511.5 472v2M514.5 473v2M517.5 474v2M526.5 474v2M496.5 476v2M513.5 477v2M520.5 479v2M518.5 481v2M474.5 481v2M477.5 481v2M473.5 483v2M508.5 482v2M509.5 484v2M525.5 483v2M476.5 486v2M499.5 487v2M506.5 487v2M510.5 487v2M503.5 491v2M469.5 495v2M497.5 498v2M470.5 501v2M493.5 507v2M492.5 508v2M491.5 513v2M489.5 514v2M490.5 515v2M487.5 516v2M488.5 516v2M484.5 518v2M486.5 518v2M485.5 521v2M475.5 525v2M478.5 528v2M481.5 530v2M480.5 532v2M479.5 533v2M468.5 537v2M463.5 539v2M472.5 539v2M471.5 542v2M465.5 550v2M462.5 552v2M460.5 556v2M451.5 557v2M456.5 564v2M459.5 570v2M467.5 577v2M464.5 581v2M455.5 593v2M461.5 596v2M457.5 600v2M452.5 610v2M454.5 610v2M450.5 628v2M448.5 632v2M579.5 383v2M570.5 398v2M573.5 408v2M575.5 411v2M554.5 415v2M561.5 420v2M587.5 414v2M586.5 419v2M588.5 420v2M581.5 423v2M584.5 424v2M585.5 427v2M540.5 427v2M544.5 430v2M553.5 432v2M569.5 432v2M572.5 436v2M574.5 436v2M558.5 438v2M568.5 439v2M563.5 441v2" stroke="#000" stroke-width="1.15" fill="none"/>
<path d="M450.8 634.0h1.4M451.8 630.0h1.4M452.8 627.6h1.4M453.8 625.0h1.4M454.8 622.8h1.4M455.8 619.0h1.4M456.8 615.0h1.4M457.8 610.0h1.4M458.8 606.0h1.4M459.8 602.0h1.4M460.8 598.0h1.4M461.8 595.0h1.4M462.8 591.8h1.4M463.8 589.0h1.4M464.8 585.0h1.4M465.8 582.8h1.4M466.8 581.5h1.4M467.8 581.0h1.4M468.8 586.0h1.4M469.8 586.2h1.4M470.8 584.0h1.4M471.8 582.0h1.4M472.8 580.3h1.4M473.8 576.8h1.4M474.8 573.3h1.4M475.8 570.9h1.4M476.8 569.4h1.4M477.8 568.0h1.4M478.8 567.1h1.4M479.8 566.2h1.4M480.8 565.3h1.4M481.8 564.1h1.4M482.8 562.8h1.4M483.8 561.6h1.4M484.8 560.4h1.4M485.8 559.3h1.4M486.8 558.1h1.4M487.8 556.7h1.4M488.8 555.4h1.4M489.8 554.0h1.4M490.8 552.8h1.4M491.8 551.6h1.4M492.8 550.7h1.4M493.8 549.8h1.4M494.8 548.9h1.4M495.8 548.0h1.4M496.8 545.5h1.4M497.8 543.0h1.4M498.8 541.7h1.4M499.8 540.3h1.4M500.8 539.0h1.4M501.8 537.6h1.4M502.8 536.2h1.4M503.8 534.8h1.4M504.8 533.4h1.4M505.8 532.3h1.4M506.8 531.2h1.4M507.8 530.1h1.4M508.8 529.0h1.4M509.8 528.3h1.4M510.8 527.5h1.4M511.8 526.8h1.4M512.8 525.4h1.4M513.8 524.0h1.4M514.8 522.6h1.4M515.8 521.4h1.4M516.8 520.2h1.4M517.8 518.9h1.4M518.8 517.7h1.4M519.8 516.3h1.4M520.8 515.0h1.4M521.8 513.6h1.4M522.8 512.4h1.4M523.8 511.2h1.4M524.8 510.0h1.4M525.8 509.4h1.4M526.8 508.8h1.4M527.8 508.2h1.4M528.8 507.6h1.4M529.8 507.0h1.4M530.8 505.6h1.4M531.8 504.2h1.4M532.8 502.8h1.4M533.8 501.1h1.4M534.8 499.5h1.4M535.8 498.3h1.4M536.8 497.2h1.4M537.8 496.0h1.4M538.8 495.0h1.4M539.8 494.0h1.4M540.8 493.0h1.4M541.8 492.0h1.4M542.8 490.3h1.4M543.8 488.7h1.4M544.8 487.0h1.4M545.8 485.7h1.4M546.8 484.3h1.4M547.8 483.0h1.4M548.8 482.4h1.4M549.8 481.8h1.4M550.8 481.1h1.4M551.8 480.5h1.4M552.8 481.0h1.4M553.8 481.5h1.4M554.8 482.0h1.4M555.8 481.5h1.4M556.8 481.1h1.4M557.8 480.6h1.4M558.8 480.2h1.4M559.8 479.7h1.4M560.8 479.2h1.4M561.8 478.6h1.4M562.8 478.1h1.4M563.8 477.5h1.4M564.8 477.0h1.4M565.8 476.4h1.4M566.8 475.8h1.4M567.8 475.2h1.4M568.8 474.6h1.4M569.8 474.0h1.4M570.8 473.6h1.4M571.8 473.2h1.4M572.8 472.8h1.4M573.8 472.4h1.4M574.8 472.0h1.4M575.8 471.4h1.4M576.8 470.8h1.4M577.8 470.2h1.4M578.8 469.6h1.4M579.8 469.0h1.4M580.8 467.9h1.4M581.8 466.9h1.4M582.8 465.9h1.4M583.8 464.8h1.4M584.8 463.8h1.4M585.8 462.8h1.4M586.8 461.7h1.4M587.8 460.7h1.4M588.8 459.3h1.4M589.8 457.9h1.4M590.8 456.5h1.4M591.8 456.5h1.4M592.8 456.6h1.4M593.8 456.6h1.4M594.8 456.7h1.4M595.8 456.7h1.4M596.8 455.6h1.4M597.8 454.5h1.4M598.8 453.5h1.4M599.8 452.4h1.4M600.8 451.6h1.4M601.8 450.8h1.4M602.8 450.0h1.4M603.8 448.8h1.4M604.8 447.6h1.4M605.8 447.5h1.4M606.8 447.4h1.4M607.8 447.2h1.4M608.8 447.1h1.4M609.8 447.0h1.4M610.8 445.9h1.4M611.8 444.8h1.4M612.8 443.7h1.4M613.8 442.6h1.4M614.8 442.0h1.4M615.8 441.3h1.4M616.8 440.6h1.4M617.8 440.0h1.4M618.8 439.0h1.4M619.8 437.9h1.4M620.8 436.9h1.4M621.8 436.1h1.4M622.8 435.2h1.4M623.8 434.4h1.4M624.8 433.5h1.4M625.8 432.7h1.4M626.8 432.3h1.4M627.8 431.9h1.4M628.8 431.4h1.4M629.8 431.0h1.4M630.8 430.3h1.4M631.8 429.7h1.4M632.8 429.0h1.4M633.8 428.3h1.4M634.8 427.7h1.4M635.8 427.0h1.4M636.8 426.6h1.4M637.8 426.1h1.4M638.8 425.7h1.4M639.8 425.3h1.4M640.8 424.9h1.4M641.8 424.5h1.4M642.8 426.0h1.4M643.8 424.0h1.4M644.8 422.9h1.4M645.8 421.8h1.4M646.8 420.6h1.4M647.8 419.5h1.4M648.8 418.9h1.4M649.8 418.2h1.4M650.8 417.6h1.4M651.8 417.0h1.4M652.8 416.2h1.4M653.8 415.4h1.4M654.8 414.5h1.4M655.8 413.7h1.4M656.8 413.7h1.4M657.8 413.7h1.4M658.8 413.7h1.4M659.8 413.7h1.4M660.8 413.7h1.4M661.8 413.7h1.4M662.8 412.8h1.4M663.8 411.9h1.4M664.8 411.0h1.4M665.8 410.6h1.4M666.8 410.1h1.4M667.8 409.7h1.4M668.8 409.2h1.4M669.8 408.8h1.4M670.8 408.4h1.4M671.8 408.1h1.4M672.8 407.7h1.4M673.8 407.4h1.4M674.8 407.0h1.4M675.8 406.4h1.4M676.8 405.7h1.4M677.8 405.1h1.4M678.8 404.4h1.4M679.8 403.8h1.4M680.8 403.4h1.4M681.8 402.9h1.4M682.8 402.5h1.4M683.8 404.5h1.4M684.8 403.0h1.4M685.8 402.3h1.4M686.8 401.7h1.4M687.8 401.0h1.4M688.8 400.4h1.4M689.8 399.7h1.4M690.8 398.9h1.4M691.8 398.0h1.4M692.8 397.2h1.4M693.8 396.3h1.4M694.8 395.5h1.4M695.8 395.3h1.4M696.8 395.2h1.4M697.8 395.0h1.4M698.8 394.9h1.4M699.8 394.7h1.4M700.8 394.2h1.4M701.8 393.6h1.4M702.8 393.1h1.4M703.8 392.5h1.4M704.8 392.0h1.4M705.8 391.4h1.4M706.8 390.8h1.4M707.8 390.2h1.4M708.8 389.6h1.4M709.8 389.0h1.4M710.8 388.3h1.4M711.8 387.6h1.4M712.8 387.0h1.4M713.8 386.3h1.4M714.8 385.6h1.4M715.8 385.1h1.4M716.8 384.6h1.4M717.8 384.0h1.4M718.8 383.5h1.4M719.8 383.0h1.4M720.8 382.5h1.4M721.8 382.1h1.4M722.8 381.6h1.4M723.8 381.2h1.4M724.8 380.7h1.4M725.8 380.5h1.4M726.8 380.2h1.4M727.8 380.0h1.4M728.8 379.7h1.4M729.8 379.5h1.4M730.8 379.1h1.4M731.8 378.7h1.4M732.8 378.2h1.4M733.8 377.8h1.4M734.8 377.4h1.4M735.8 376.9h1.4M736.8 376.4h1.4M737.8 375.9h1.4M738.8 375.4h1.4M739.8 374.9h1.4M740.8 374.5h1.4M741.8 374.1h1.4M742.8 373.7h1.4M743.8 373.3h1.4M744.8 372.9h1.4M745.8 372.7h1.4M746.8 372.5h1.4M446.8 623.6h1.4M447.8 625.0h1.4M448.8 610.0h1.4M449.8 594.0h1.4" stroke="#009000" stroke-width="1.8" fill="none"/>
<path d="M449.5 633.0h2M451.5 632.0h2M453.5 629.0h2M455.5 617.6h2M457.5 611.0h2M459.5 611.0h2M461.5 601.0h2M463.5 597.0h2M465.5 594.0h2M467.5 585.0h2M469.5 582.0h2M471.5 577.0h2M473.5 571.0h2M475.5 571.0h2M477.5 565.0h2M479.5 557.7h2M481.5 555.3h2M483.5 553.0h2M485.5 548.0h2M487.5 543.0h2M489.5 540.0h2M491.5 540.0h2M493.5 540.0h2M495.5 534.0h2M497.5 532.5h2M499.5 531.0h2M501.5 528.5h2M503.5 526.0h2M505.5 523.7h2M507.5 519.0h2M509.5 519.0h2M511.5 517.0h2M513.5 516.2h2M515.5 515.5h2M517.5 514.8h2M519.5 514.0h2M521.5 508.6h2M523.5 507.4h2M525.5 502.0h2M527.5 498.7h2M529.5 496.0h2M531.5 492.0h2M533.5 488.0h2M535.5 488.0h2M537.5 488.0h2M539.5 486.9h2M541.5 484.6h2M543.5 483.7h2M545.5 482.8h2M547.5 481.9h2M549.5 481.0h2M551.5 480.3h2M553.5 479.7h2M555.5 479.0h2M557.5 477.5h2M559.5 476.0h2M561.5 474.7h2M563.5 474.2h2M565.5 473.7h2M567.5 473.0h2M569.5 471.9h2M571.5 471.0h2M573.5 470.4h2M575.5 469.7h2M577.5 469.1h2M579.5 468.6h2M581.5 468.0h2M583.5 468.0h2M585.5 468.0h2M587.5 466.2h2M589.5 464.5h2M591.5 462.8h2M593.5 462.8h2M595.5 462.8h2M597.5 462.8h2M599.5 462.8h2M601.5 462.3h2M603.5 461.3h2M605.5 460.2h2M607.5 459.0h2M609.5 459.0h2M611.5 459.0h2M613.5 459.0h2M615.5 459.0h2M617.5 456.7h2M619.5 456.2h2M621.5 455.7h2M623.5 455.2h2M625.5 454.5h2M627.5 453.4h2M629.5 452.4h2M631.5 451.5h2M633.5 450.8h2M635.5 450.4h2M637.5 450.0h2M639.5 448.9h2M641.5 447.5h2M643.5 445.6h2M645.5 445.1h2M647.5 444.6h2M649.5 443.6h2M651.5 442.6h2M653.5 441.0h2M655.5 441.0h2M657.5 441.0h2M659.5 439.0h2M661.5 439.0h2M663.5 439.0h2M665.5 437.0h2M667.5 437.0h2M669.5 432.7h2M671.5 432.7h2M673.5 430.7h2M675.5 427.8h2M677.5 427.8h2M679.5 424.5h2M681.5 423.6h2M683.5 423.6h2M685.5 422.0h2M687.5 420.8h2M689.5 419.8h2M691.5 419.8h2M693.5 419.8h2M695.5 417.9h2M697.5 417.9h2M699.5 417.9h2M701.5 417.9h2M703.5 417.0h2M705.5 416.0h2M707.5 416.0h2M709.5 415.5h2M711.5 415.0h2M713.5 415.0h2M715.5 415.0h2M717.5 413.7h2M719.5 413.7h2M721.5 413.7h2M723.5 413.7h2M725.5 413.7h2M727.5 413.7h2M729.5 413.7h2M731.5 413.7h2M733.5 413.7h2M735.5 413.7h2M737.5 413.7h2M739.5 413.7h2M741.5 412.0h2M743.5 412.0h2M745.5 412.0h2M447.5 650.0h2" stroke="#a800a8" stroke-width="1.8" fill="none"/>
<path d="M447.8 642.0h1.4M448.8 639.0h1.4M449.8 635.8h1.4M450.8 621.0h1.4M451.8 619.0h1.4M452.8 617.8h1.4M453.8 616.4h1.4M454.8 615.0h1.4M455.8 610.0h1.4M456.8 608.0h1.4M457.8 606.0h1.4M458.8 604.0h1.4M459.8 600.0h1.4M460.8 599.8h1.4M461.8 596.7h1.4M462.8 594.0h1.4M463.8 593.0h1.4M464.8 591.2h1.4M465.8 590.6h1.4M466.8 590.0h1.4M467.8 587.7h1.4M468.8 584.0h1.4M469.8 580.3h1.4M470.8 579.0h1.4M471.8 577.4h1.4M472.8 575.7h1.4M473.8 572.7h1.4M474.8 569.6h1.4M475.8 566.6h1.4M476.8 564.8h1.4M477.8 563.0h1.4M478.8 561.7h1.4M479.8 560.3h1.4M480.8 559.0h1.4M481.8 557.1h1.4M482.8 555.3h1.4M483.8 553.5h1.4M484.8 551.6h1.4M485.8 550.9h1.4M486.8 550.3h1.4M487.8 549.6h1.4M488.8 549.0h1.4M489.8 548.3h1.4M490.8 547.7h1.4M491.8 547.0h1.4M492.8 545.8h1.4M493.8 544.5h1.4M494.8 543.3h1.4M495.8 542.0h1.4M496.8 540.8h1.4M497.8 539.6h1.4M498.8 538.3h1.4M499.8 537.1h1.4M500.8 535.9h1.4M501.8 534.6h1.4M502.8 533.4h1.4M503.8 532.3h1.4M504.8 531.2h1.4M505.8 530.1h1.4M506.8 529.0h1.4M507.8 528.2h1.4M508.8 527.5h1.4M509.8 526.8h1.4M510.8 526.0h1.4M511.8 524.8h1.4M512.8 523.5h1.4M513.8 522.2h1.4M514.8 521.0h1.4M515.8 520.4h1.4M516.8 519.8h1.4M517.8 519.1h1.4M518.8 518.5h1.4M519.8 517.8h1.4M520.8 517.1h1.4M521.8 516.4h1.4M522.8 515.7h1.4M523.8 515.0h1.4M524.8 514.0h1.4M525.8 513.0h1.4M526.8 512.0h1.4M527.8 511.0h1.4M528.8 510.0h1.4M529.8 509.0h1.4M530.8 508.0h1.4M531.8 507.0h1.4M532.8 506.0h1.4M533.8 505.0h1.4M534.8 504.0h1.4M535.8 503.0h1.4M536.8 502.0h1.4M537.8 501.5h1.4M538.8 501.0h1.4M539.8 500.5h1.4M540.8 500.0h1.4M541.8 499.6h1.4M542.8 499.1h1.4M543.8 498.7h1.4M544.8 498.3h1.4M545.8 497.9h1.4M546.8 497.4h1.4M547.8 497.0h1.4M548.8 496.2h1.4M549.8 495.4h1.4M550.8 494.5h1.4M551.8 493.7h1.4M552.8 492.9h1.4M553.8 492.1h1.4M554.8 491.2h1.4M555.8 490.4h1.4M556.8 489.6h1.4M557.8 489.3h1.4M558.8 489.1h1.4M559.8 488.8h1.4M560.8 488.5h1.4M561.8 488.3h1.4M562.8 488.0h1.4M563.8 487.6h1.4M564.8 487.3h1.4M565.8 486.9h1.4M566.8 486.6h1.4M567.8 486.2h1.4M568.8 485.9h1.4M569.8 485.5h1.4M570.8 484.9h1.4M571.8 484.3h1.4M572.8 483.8h1.4M573.8 483.2h1.4M574.8 482.6h1.4M575.8 482.0h1.4M576.8 481.0h1.4M577.8 480.0h1.4M578.8 479.0h1.4M579.8 478.0h1.4M580.8 477.2h1.4M581.8 476.4h1.4M582.8 475.6h1.4M583.8 474.8h1.4M584.8 474.0h1.4M585.8 473.3h1.4M586.8 472.6h1.4M587.8 471.9h1.4M588.8 471.2h1.4M589.8 470.5h1.4M590.8 469.8h1.4M591.8 469.1h1.4M592.8 468.4h1.4M593.8 467.7h1.4M594.8 467.0h1.4M595.8 466.6h1.4M596.8 466.2h1.4M597.8 465.8h1.4M598.8 465.4h1.4M599.8 465.0h1.4M600.8 464.7h1.4M601.8 464.3h1.4M602.8 464.0h1.4M603.8 463.6h1.4M604.8 463.3h1.4M605.8 462.8h1.4M606.8 462.3h1.4M607.8 461.8h1.4M608.8 461.3h1.4M609.8 460.8h1.4M610.8 460.3h1.4M611.8 459.8h1.4M612.8 459.3h1.4M613.8 458.8h1.4M614.8 458.3h1.4M615.8 457.7h1.4M616.8 457.2h1.4M617.8 456.6h1.4M618.8 456.1h1.4M619.8 455.5h1.4M620.8 455.3h1.4M621.8 455.2h1.4M622.8 455.0h1.4M623.8 454.9h1.4M624.8 454.7h1.4M625.8 454.4h1.4M626.8 454.2h1.4M627.8 453.9h1.4M628.8 453.7h1.4M629.8 453.4h1.4M630.8 453.1h1.4M631.8 452.7h1.4M632.8 452.4h1.4M633.8 452.0h1.4M634.8 451.7h1.4M635.8 451.6h1.4M636.8 451.4h1.4M637.8 451.3h1.4M638.8 451.1h1.4M639.8 451.0h1.4M640.8 450.7h1.4M641.8 450.3h1.4M642.8 450.0h1.4M643.8 449.6h1.4M644.8 449.3h1.4M645.8 448.8h1.4M646.8 448.3h1.4M647.8 447.8h1.4M648.8 447.3h1.4M649.8 446.8h1.4M650.8 446.6h1.4M651.8 446.3h1.4M652.8 446.1h1.4M653.8 445.8h1.4M654.8 445.6h1.4M655.8 445.4h1.4M656.8 445.2h1.4M657.8 445.0h1.4M658.8 444.8h1.4M659.8 444.6h1.4M660.8 444.2h1.4M661.8 443.8h1.4M662.8 443.4h1.4M663.8 443.0h1.4M664.8 442.6h1.4M665.8 442.2h1.4M666.8 441.8h1.4M667.8 441.5h1.4M668.8 441.1h1.4M669.8 440.7h1.4M670.8 440.3h1.4M671.8 439.9h1.4M672.8 439.6h1.4M673.8 439.2h1.4M674.8 438.8h1.4M675.8 438.6h1.4M676.8 438.4h1.4M677.8 438.1h1.4M678.8 437.9h1.4M679.8 437.7h1.4M680.8 437.4h1.4M681.8 437.0h1.4M682.8 436.7h1.4M683.8 436.3h1.4M684.8 436.0h1.4M685.8 435.5h1.4M686.8 435.0h1.4M687.8 434.6h1.4M688.8 434.1h1.4M689.8 433.6h1.4M690.8 433.3h1.4M691.8 433.0h1.4M692.8 432.6h1.4M693.8 432.3h1.4M694.8 432.0h1.4M695.8 431.6h1.4M696.8 431.1h1.4M697.8 430.7h1.4M698.8 430.2h1.4M699.8 429.8h1.4M700.8 429.4h1.4M701.8 429.0h1.4M702.8 428.6h1.4M703.8 428.2h1.4M704.8 427.8h1.4M705.8 427.2h1.4M706.8 426.6h1.4M707.8 426.0h1.4M708.8 425.4h1.4M709.8 424.8h1.4M710.8 424.2h1.4M711.8 423.7h1.4M712.8 423.1h1.4M713.8 422.6h1.4M714.8 422.0h1.4M715.8 421.2h1.4M716.8 420.4h1.4M717.8 419.5h1.4M718.8 418.7h1.4M719.8 417.9h1.4M720.8 417.5h1.4M721.8 417.1h1.4M722.8 416.8h1.4M723.8 416.4h1.4M724.8 416.0h1.4M725.8 415.5h1.4M726.8 415.1h1.4M727.8 414.6h1.4M728.8 414.2h1.4M729.8 413.7h1.4M730.8 413.0h1.4M731.8 412.4h1.4M732.8 411.7h1.4M733.8 411.1h1.4M734.8 410.4h1.4M735.8 410.1h1.4M736.8 409.8h1.4M737.8 409.4h1.4M738.8 409.1h1.4M739.8 408.8h1.4M740.8 408.3h1.4M741.8 407.8h1.4M742.8 407.3h1.4M743.8 406.8h1.4M744.8 406.3h1.4M745.8 405.3h1.4M746.8 404.3h1.4" stroke="#0000ff" stroke-width="1.85" fill="none"/>
<path d="M450.4 635.6h2.1M451.4 637.0h2.1M452.4 639.0h2.1M453.4 641.0h2.1M454.4 641.0h2.1M455.4 637.8h2.1M456.4 640.0h2.1M457.4 639.2h2.1M458.4 638.4h2.1M459.4 636.8h2.1M460.4 637.9h2.1M461.4 637.0h2.1M462.4 634.0h2.1M463.4 634.5h2.1M464.4 635.0h2.1M465.4 635.5h2.1M466.4 636.0h2.1M467.4 635.0h2.1M468.4 630.0h2.1M469.4 628.9h2.1M470.4 627.8h2.1M471.4 626.3h2.1M472.4 624.8h2.1M473.4 623.4h2.1M474.4 622.0h2.1M475.4 621.0h2.1M476.4 619.9h2.1M477.4 618.8h2.1M478.4 619.4h2.1M479.4 620.0h2.1M480.4 621.0h2.1M481.4 618.0h2.1M482.4 616.9h2.1M483.4 615.8h2.1M484.4 616.1h2.1M485.4 616.4h2.1M486.4 616.7h2.1M487.4 617.0h2.1M488.4 617.4h2.1M489.4 617.7h2.1M490.4 618.1h2.1M491.4 618.5h2.1M492.4 618.9h2.1M493.4 617.8h2.1M494.4 616.7h2.1M495.4 616.7h2.1M496.4 616.7h2.1M497.4 616.7h2.1M498.4 616.7h2.1M499.4 616.7h2.1M500.4 615.8h2.1M501.4 612.0h2.1M502.4 612.0h2.1M503.4 612.0h2.1M504.4 612.0h2.1M505.4 612.0h2.1M506.4 612.0h2.1M507.4 612.0h2.1M508.4 612.0h2.1M509.4 612.0h2.1M510.4 612.0h2.1M511.4 610.0h2.1M512.5 610.0h2.1M513.5 610.0h2.1M514.5 610.0h2.1M515.5 610.0h2.1M516.5 610.0h2.1M517.5 610.0h2.1M518.5 610.0h2.1M519.5 610.0h2.1M520.5 611.0h2.1M521.5 611.0h2.1M522.5 611.0h2.1M523.5 611.0h2.1M524.5 608.0h2.1M525.5 608.0h2.1M526.5 608.0h2.1M527.5 606.0h2.1M528.5 606.0h2.1M529.5 606.0h2.1M530.5 606.0h2.1M531.5 603.0h2.1M532.5 603.2h2.1M533.5 603.5h2.1M534.5 604.5h2.1M535.5 601.0h2.1M536.5 601.0h2.1M537.5 601.0h2.1M538.5 601.0h2.1M539.5 602.0h2.1M540.5 602.0h2.1M541.5 602.0h2.1M542.5 602.0h2.1M543.5 602.0h2.1M544.5 602.0h2.1M545.5 602.0h2.1M546.5 602.0h2.1M547.5 603.5h2.1M548.5 599.7h2.1M549.5 600.4h2.1M550.5 601.0h2.1M551.5 599.5h2.1M552.5 598.0h2.1M553.5 598.0h2.1M554.5 598.0h2.1M555.5 598.0h2.1M556.5 598.0h2.1M557.5 599.0h2.1M558.5 599.0h2.1M559.5 599.0h2.1M560.5 599.0h2.1M561.5 599.0h2.1M562.5 599.0h2.1M563.5 600.0h2.1M564.5 600.0h2.1M565.5 600.0h2.1M566.5 600.0h2.1M567.5 600.0h2.1M568.5 600.0h2.1M569.5 600.0h2.1M570.5 600.0h2.1M571.5 600.0h2.1M572.5 600.0h2.1M573.5 600.0h2.1M574.5 600.0h2.1M575.5 600.0h2.1M576.5 600.0h2.1M577.5 596.0h2.1M578.5 596.0h2.1M579.5 596.0h2.1M580.5 596.0h2.1M581.5 596.0h2.1M582.5 596.0h2.1M583.5 596.0h2.1M584.5 596.0h2.1M585.5 596.0h2.1M586.5 596.0h2.1M587.5 593.0h2.1M588.5 593.0h2.1M589.5 593.0h2.1M590.5 593.0h2.1M591.5 593.0h2.1M592.5 591.7h2.1M593.5 591.7h2.1M594.5 591.7h2.1M595.5 591.7h2.1M596.5 591.7h2.1M597.5 591.7h2.1M598.5 591.7h2.1M599.5 591.7h2.1M600.5 591.7h2.1M601.5 593.0h2.1M602.5 591.7h2.1M603.5 591.7h2.1M604.5 591.7h2.1M605.5 591.7h2.1M606.5 591.7h2.1M607.5 591.7h2.1M608.5 591.7h2.1M609.5 591.7h2.1M610.5 591.7h2.1M611.5 591.7h2.1M612.5 593.0h2.1M613.5 592.5h2.1M614.5 592.0h2.1M615.5 590.4h2.1M616.5 588.8h2.1M617.5 588.8h2.1M618.5 588.8h2.1M619.5 588.8h2.1M620.5 588.8h2.1M621.5 588.8h2.1M622.5 589.8h2.1M623.5 589.8h2.1M624.5 589.8h2.1M625.5 589.8h2.1M626.5 589.8h2.1M627.5 589.8h2.1M628.5 589.8h2.1M629.5 590.9h2.1M630.5 590.9h2.1M631.5 590.9h2.1M632.5 590.9h2.1M633.5 590.9h2.1M634.5 590.9h2.1M635.5 590.9h2.1M636.5 590.9h2.1M637.5 590.9h2.1M638.5 590.9h2.1M639.5 590.9h2.1M640.5 591.9h2.1M641.5 591.9h2.1M642.5 591.9h2.1M643.5 591.9h2.1M644.5 591.9h2.1M645.5 591.9h2.1M646.5 591.9h2.1M647.5 591.9h2.1M648.5 591.9h2.1M649.5 588.8h2.1M650.5 588.8h2.1M651.5 588.8h2.1M652.5 588.8h2.1M653.5 588.8h2.1M654.5 589.9h2.1M655.5 589.9h2.1M656.5 589.9h2.1M657.5 589.9h2.1M658.5 589.9h2.1M659.5 589.9h2.1M660.5 589.9h2.1M661.5 589.9h2.1M662.5 589.9h2.1M663.5 589.9h2.1M664.5 589.9h2.1M665.5 589.9h2.1M666.5 588.8h2.1M667.5 588.8h2.1M668.5 588.8h2.1M669.5 588.8h2.1M670.5 588.8h2.1M671.5 588.8h2.1M672.5 587.9h2.1M673.5 587.9h2.1M674.5 587.9h2.1M675.5 587.9h2.1M676.5 587.9h2.1M677.5 587.9h2.1M678.5 588.8h2.1M679.5 588.8h2.1M680.5 588.8h2.1M681.5 588.8h2.1M682.5 588.8h2.1M683.5 588.8h2.1M684.5 584.8h2.1M685.5 584.8h2.1M686.5 584.8h2.1M687.5 584.8h2.1M688.5 581.8h2.1M689.5 581.8h2.1M690.5 581.8h2.1M691.5 581.8h2.1M692.5 581.8h2.1M693.5 581.8h2.1M694.5 579.0h2.1M695.5 579.0h2.1M696.5 579.0h2.1M697.5 579.0h2.1M698.5 578.0h2.1M699.5 578.0h2.1M700.5 578.0h2.1M701.5 579.0h2.1M702.5 577.9h2.1M703.5 577.9h2.1M704.5 577.9h2.1M705.5 577.9h2.1M706.5 577.9h2.1M707.5 577.9h2.1M708.5 577.9h2.1M709.5 573.9h2.1M710.5 573.9h2.1M711.5 573.9h2.1M712.5 573.9h2.1M713.5 569.8h2.1M714.5 566.8h2.1M715.5 566.8h2.1M716.5 566.8h2.1M717.5 566.8h2.1M718.5 566.8h2.1M719.5 566.8h2.1M720.5 566.8h2.1M721.5 565.8h2.1M722.5 565.8h2.1M723.5 565.8h2.1M724.5 565.8h2.1M725.5 564.8h2.1M726.5 565.4h2.1M727.5 566.0h2.1M728.5 565.4h2.1M729.5 564.8h2.1M730.5 564.8h2.1M731.5 564.8h2.1M732.5 564.8h2.1M733.5 564.8h2.1M734.5 564.8h2.1M735.5 563.8h2.1M736.5 563.8h2.1M737.5 563.8h2.1M738.5 563.8h2.1M739.5 563.8h2.1M740.5 563.8h2.1M741.5 560.8h2.1M742.5 560.8h2.1M743.5 560.8h2.1M744.5 560.8h2.1M745.5 560.8h2.1M746.5 560.8h2.1" stroke="#ff0000" stroke-width="1.9" fill="none"/>
<rect x="447" y="665" width="1.2" height="1.2" fill="#ff0000"/>
<path d="M448.4 658h2.6" stroke="#ff0000" stroke-width="2" fill="none"/>
</svg>
<div id="sbar" class="abs"></div>
<div class="abs lb" style="left:346px;top:686px;color:#000">样本数目</div><div class="abs val" style="left:403px;top:685px;color:#000">300</div>
<div class="abs lb" style="left:346px;top:704px;color:#ff0000">偏离</div><div class="abs val" style="left:403px;top:703px;color:#ff0000">311</div>
<div class="abs lb" style="left:628px;top:686px;color:#000">最新样本</div><div class="abs val" style="left:686px;top:685px;color:#000">1102</div>
<div class="abs lb" style="left:628px;top:704px;color:#008000">吞吐量</div><div class="abs val" style="left:686px;top:703px;color:#008000">8,637.236/分钟</div>
<div class="abs lb" style="left:1011px;top:686px;color:#0000ff">平均</div><div class="abs val" style="left:1043px;top:685px;color:#0000ff">767</div>
<div class="abs lb" style="left:1011px;top:704px;color:#a000a0">中值</div><div class="abs val" style="left:1043px;top:703px;color:#a000a0">748</div>
<div id="botline" class="abs"></div>
</body></html>
